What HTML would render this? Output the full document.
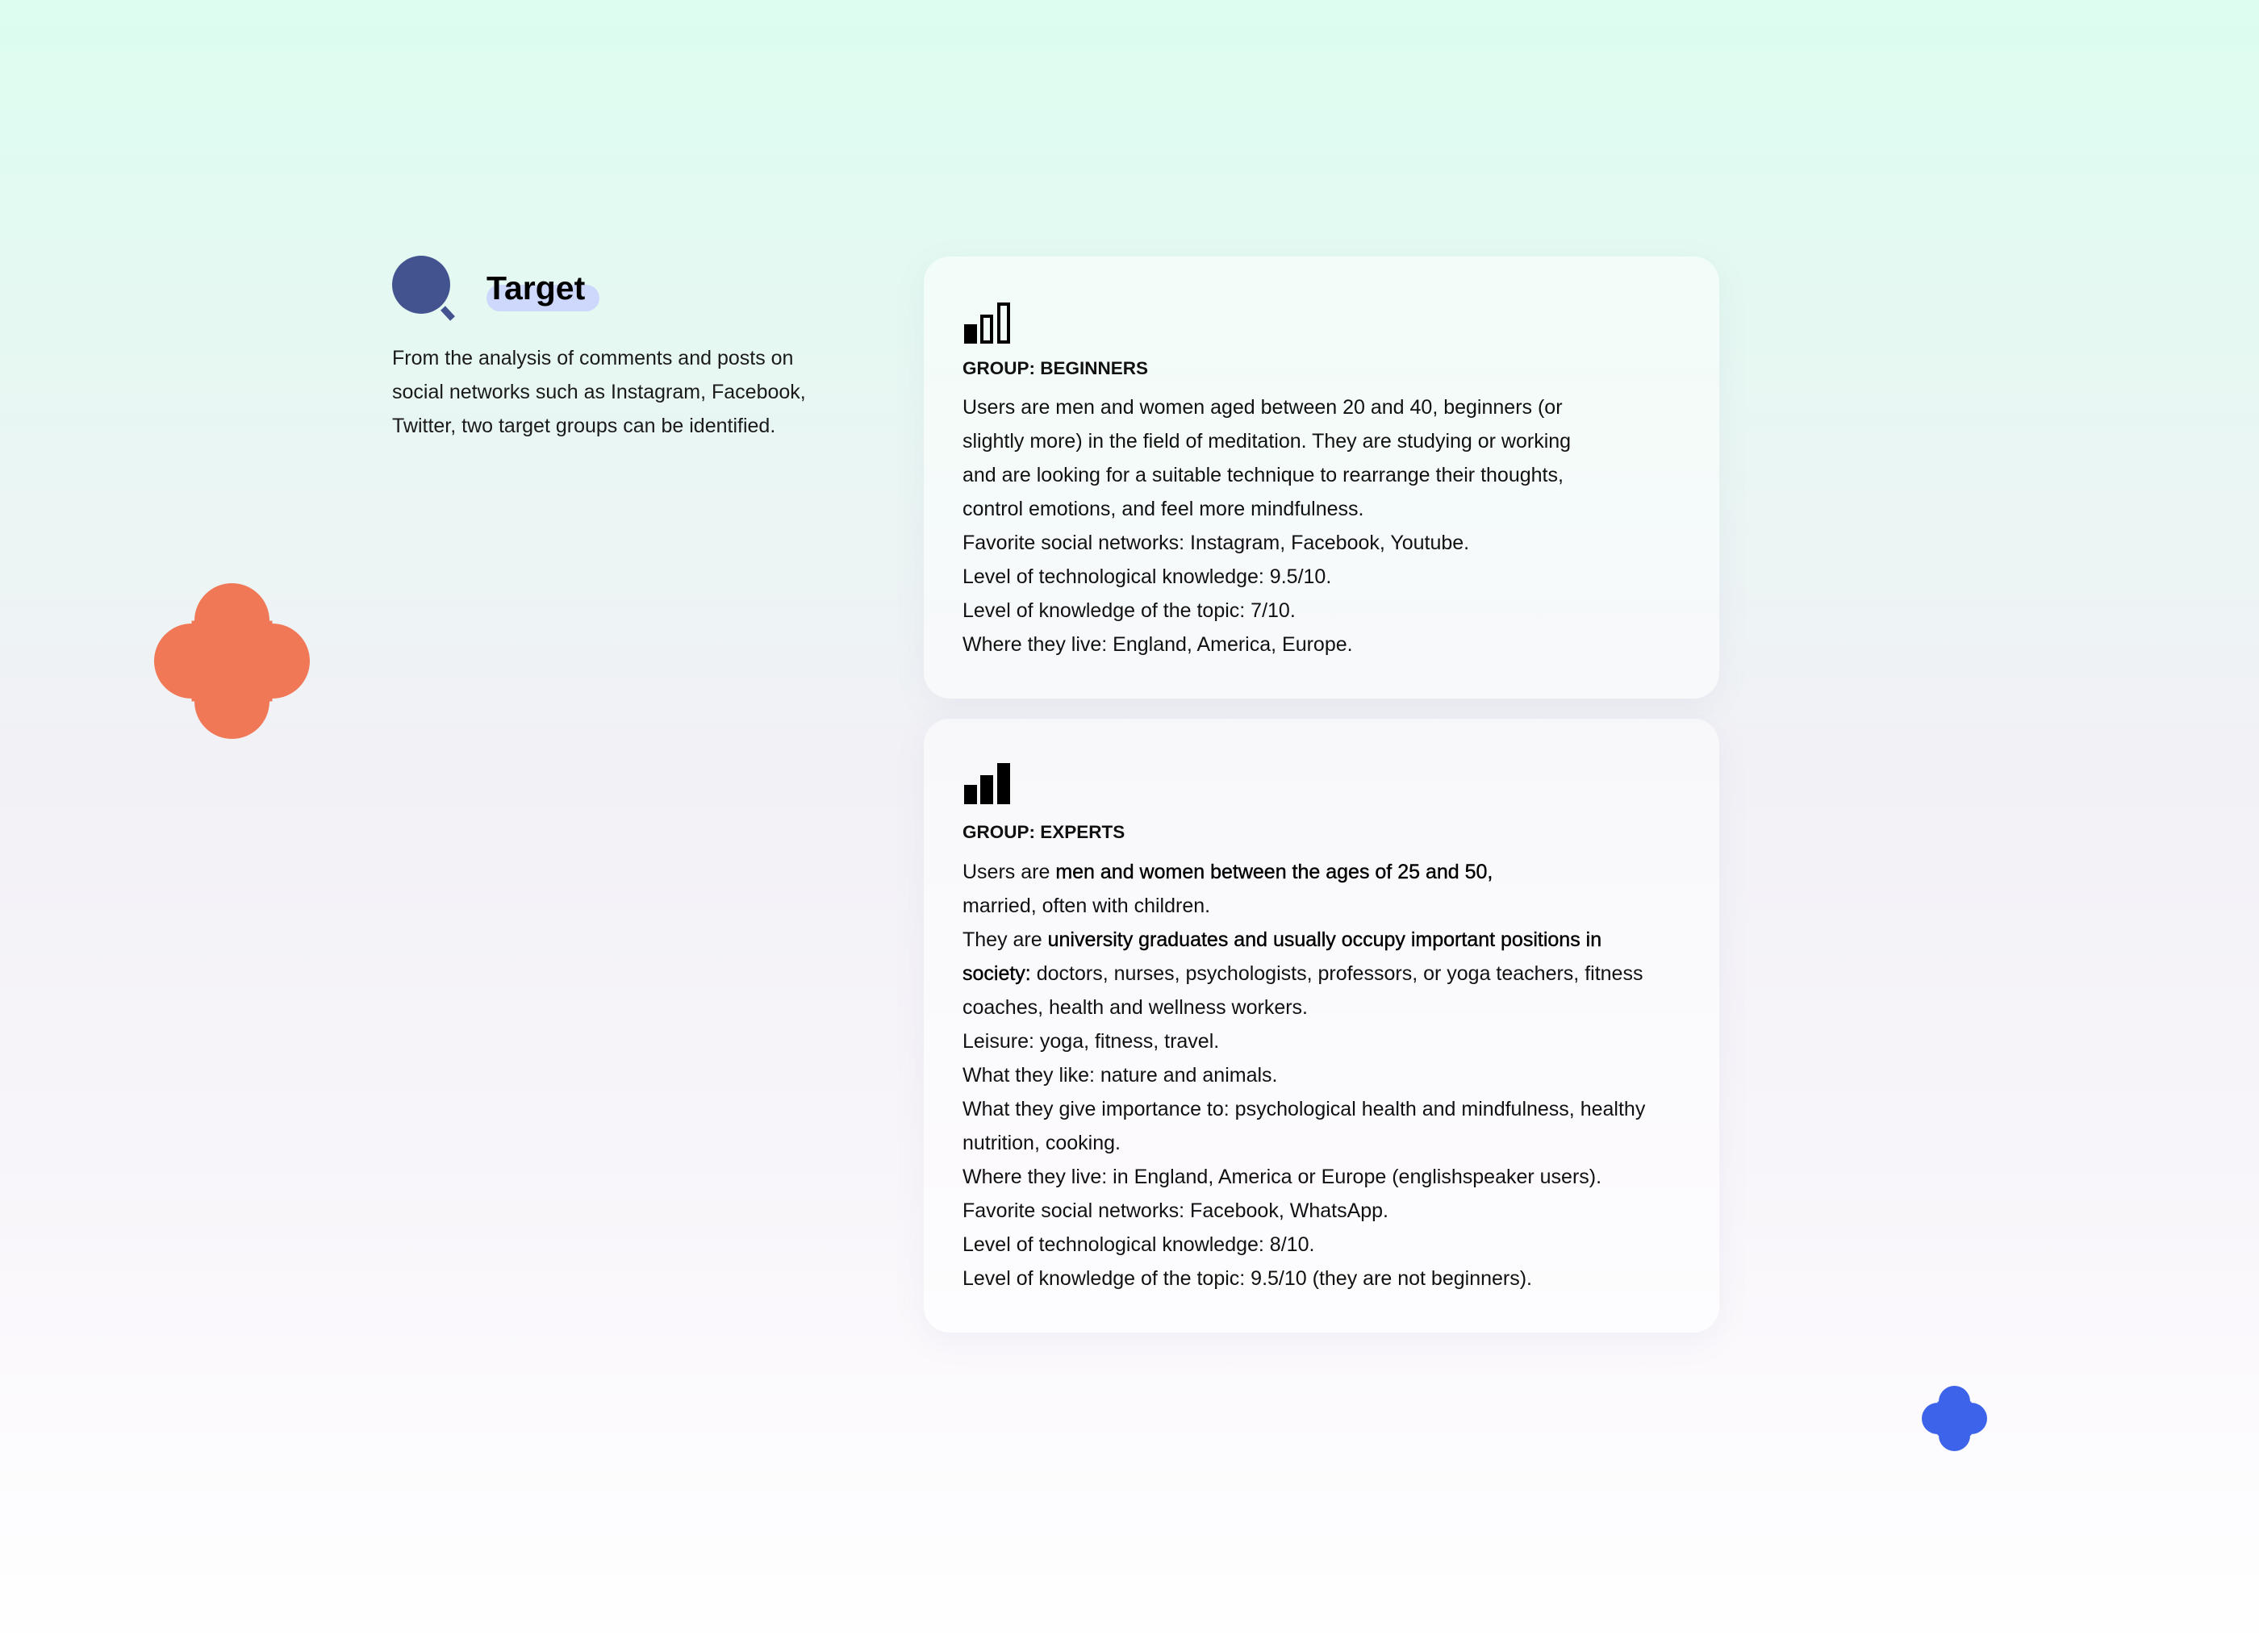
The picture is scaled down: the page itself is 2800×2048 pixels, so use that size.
<!DOCTYPE html>
<html><head><meta charset="utf-8"><style>
html,body{margin:0;padding:0}
body{width:2800px;height:2048px;position:relative;overflow:hidden;font-family:"Liberation Sans",sans-serif;color:#111;
background:linear-gradient(180deg,#dcfdf0 0%,#e6f8f2 20%,#f1f1f6 45%,#f8f5fa 70%,#ffffff 100%);}
.a{position:absolute}
.card{position:absolute;left:1145px;width:986px;border-radius:32px;background:rgba(255,255,255,0.5);box-shadow:0 10px 40px rgba(120,120,160,0.08)}
.t{position:absolute;left:1193px;font-size:25px;line-height:42px;white-space:nowrap;color:#111}
.h{position:absolute;left:1193px;font-size:22.5px;line-height:42px;font-weight:bold;color:#111}
b{font-weight:normal;color:#000;-webkit-text-stroke:0.4px #000}
</style></head><body>
<svg class="a" style="left:484px;top:316px" width="84" height="84" viewBox="0 0 84 84">
<circle cx="38" cy="37" r="36" fill="#43538f"/>
<line x1="67" y1="78" x2="79" y2="91" stroke="#43538f" stroke-width="8" transform="translate(-2,-12)"/>
</svg>
<div class="a" style="left:603px;top:353px;width:140px;height:33px;border-radius:17px;background:#cdd8fc"></div>
<div class="a" style="left:603px;top:334px;font-size:41px;line-height:46px;font-weight:bold;color:#000">Target</div>
<div class="a" style="left:486px;top:423px;font-size:25px;line-height:42px;color:#1a1a1a;white-space:nowrap">From the analysis of comments and posts on<br>social networks such as Instagram, Facebook,<br>Twitter, two target groups can be identified.</div>

<svg class="a" style="left:191px;top:723px" width="193" height="193" viewBox="0 0 193 193">
<g fill="#f07856"><circle cx="96.5" cy="46.5" r="46.5"/><circle cx="96.5" cy="146.5" r="46.5"/><circle cx="46.5" cy="96.5" r="46.5"/><circle cx="146.5" cy="96.5" r="46.5"/><rect x="46.5" y="46.5" width="100" height="100"/></g>
</svg>
<svg class="a" style="left:2382px;top:1718px" width="81" height="81" viewBox="0 0 193 193">
<g fill="#3d63eb"><circle cx="96.5" cy="46.5" r="46.5"/><circle cx="96.5" cy="146.5" r="46.5"/><circle cx="46.5" cy="96.5" r="46.5"/><circle cx="146.5" cy="96.5" r="46.5"/><rect x="46.5" y="46.5" width="100" height="100"/></g>
</svg>

<div class="card" style="top:318px;height:548px"></div>
<div class="card" style="top:891px;height:761px"></div>

<svg class="a" style="left:1195px;top:375px" width="58" height="51" viewBox="0 0 58 51">
<rect x="0" y="27" width="16" height="24" fill="#000"/>
<rect x="22" y="17" width="12" height="32" fill="none" stroke="#000" stroke-width="4"/>
<rect x="43" y="2" width="12" height="47" fill="none" stroke="#000" stroke-width="4"/>
</svg>
<div class="h" style="top:436px">GROUP: BEGINNERS</div>
<div class="t" style="top:484px">Users are men and women aged between 20 and 40, beginners (or<br>slightly more) in the field of meditation. They are studying or working<br>and are looking for a suitable technique to rearrange their thoughts,<br>control emotions, and feel more mindfulness.<br>Favorite social networks: Instagram, Facebook, Youtube.<br>Level of technological knowledge: 9.5/10.<br>Level of knowledge of the topic: 7/10.<br>Where they live: England, America, Europe.</div>

<svg class="a" style="left:1195px;top:946px" width="58" height="51" viewBox="0 0 58 51">
<rect x="0" y="27" width="16" height="24" fill="#000"/>
<rect x="20" y="15" width="16" height="36" fill="#000"/>
<rect x="41" y="0" width="16" height="51" fill="#000"/>
</svg>
<div class="h" style="top:1011px">GROUP: EXPERTS</div>
<div class="t" style="top:1060px">Users are <b>men and women between the ages of 25 and 50,</b><br>married, often with children.<br>They are <b>university graduates and usually occupy important positions in</b><br><b>society:</b> doctors, nurses, psychologists, professors, or yoga teachers, fitness<br>coaches, health and wellness workers.<br>Leisure: yoga, fitness, travel.<br>What they like: nature and animals.<br>What they give importance to: psychological health and mindfulness, healthy<br>nutrition, cooking.<br>Where they live: in England, America or Europe (englishspeaker users).<br>Favorite social networks: Facebook, WhatsApp.<br>Level of technological knowledge: 8/10.<br>Level of knowledge of the topic: 9.5/10 (they are not beginners).</div>
</body></html>
